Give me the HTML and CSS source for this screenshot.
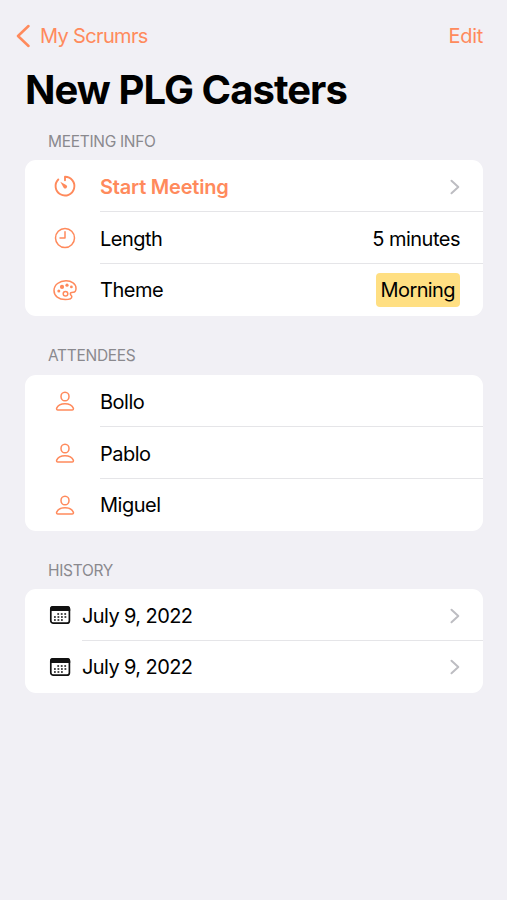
FILE: index.html
```
<!DOCTYPE html>
<html lang="en"><head><meta charset="utf-8"><title>New PLG Casters</title><link rel="stylesheet" href="styles.css"></head>
<body>
<svg class="defs" aria-hidden="true">
<symbol id="person" viewBox="0 0 24 24"><path d="M12 3.200c2.500 0 4 2 4 4.200s-1.500 4.400-4 4.400-4-2.200-4-4.400 1.500-4.200 4-4.200zM4.900 20.900h14.200c1.200 0 1.600-.8 1.200-1.800C19.400 17 16.500 14.800 12 14.800S4.600 17 3.700 19.100C3.300 20.100 3.700 20.900 4.900 20.900z"/></symbol>
<symbol id="calendar" viewBox="0 0 24 24"><rect x="2.800" y="3.800" width="18.600" height="16.400" rx="2.500" stroke-width="1.700"/><path d="M2 8V6a3 3 0 0 1 3-3h14.200a3 3 0 0 1 3 3v2z" fill="currentColor" stroke="none"/><path class="dots" d="M9.300 11h9.600M6 14h12.900M6 17h9.500"/></symbol>
<symbol id="chevron" viewBox="0 0 10 16"><path d="M1.500 1.700 8.300 8l-6.800 6.300"/></symbol>
</svg>
<nav class="nav"><a class="back"><svg class="back-icon" viewBox="0 0 14 24"><path d="M12.500 2 2 12l10.500 10"/></svg><span>My Scrumrs</span></a><a>Edit</a></nav>
<main>
<h1>New PLG Casters</h1>
<h2>MEETING INFO</h2>
<section class="card">
<div class="row accent"><svg class="icon" viewBox="0 0 24 24"><path d="M12 6.200V2.700A9.400 9.400 0 1 1 5.300 5.500" stroke-width="1.900"/><path d="m7.300 7.700 6.200 3.500a1.900 1.900 0 1 1-2.700 2.700z" fill="currentColor" stroke="none"/></svg><div class="cell"><b>Start Meeting</b><svg class="chevron"><use href="#chevron"/></svg></div></div>
<div class="row"><svg class="icon" viewBox="0 0 24 24"><circle cx="12" cy="12" r="9.500"/><path d="M12 5.700V12H7"/></svg><div class="cell"><span>Length</span><span>5 minutes</span></div></div>
<div class="row"><svg class="icon" viewBox="0 0 24 24"><path d="M13 2.800C6.500 2.800 1 6.800 1 12.500s4.800 9 11.300 9c4 0 6.500-1.200 6.500-2.800 0-1.400-1.500-1.600-1.500-3 0-1.500 1.300-1.500 3-1.500 1.700 0 2.700-1.500 2.700-4 0-4.400-4.500-7.400-10-7.400z"/><circle cx="12.500" cy="15.800" r="2.300"/><g fill="currentColor" stroke="none"><circle cx="5.800" cy="13" r="1.500"/><circle cx="9" cy="8.900" r="2.100"/><circle cx="14" cy="7.200" r="1.600"/><circle cx="18.400" cy="8.900" r="1.400"/></g></svg><div class="cell"><span>Theme</span><span class="badge">Morning</span></div></div>
</section>
<h2>ATTENDEES</h2>
<section class="card">
<div class="row"><svg class="icon"><use href="#person"/></svg><div class="cell">Bollo</div></div>
<div class="row"><svg class="icon"><use href="#person"/></svg><div class="cell">Pablo</div></div>
<div class="row"><svg class="icon"><use href="#person"/></svg><div class="cell">Miguel</div></div>
</section>
<h2>HISTORY</h2>
<section class="card history">
<div class="row"><svg class="icon"><use href="#calendar"/></svg><div class="cell"><span>July 9, 2022</span><svg class="chevron"><use href="#chevron"/></svg></div></div>
<div class="row"><svg class="icon"><use href="#calendar"/></svg><div class="cell"><span>July 9, 2022</span><svg class="chevron"><use href="#chevron"/></svg></div></div>
</section>
</main></body></html>
```
FILE: styles.css
```
*{box-sizing:border-box}
body{margin:0;height:900px;background:#f1f0f5;font:20px/24px Inter,sans-serif;letter-spacing:-.45px;color:#000}
svg{fill:none;stroke:currentColor;stroke-width:1.5;stroke-linecap:round;stroke-linejoin:round;flex:none}
.defs{display:none}
.nav{height:64px;padding:24px 24px 0 16px;display:flex;justify-content:space-between;color:#ff8a5c;letter-spacing:-.3px}
.nav span{letter-spacing:-.65px}
.back{display:flex;gap:10px}
.back-icon{width:14px;height:24px;stroke-width:2.5}
main{padding:0 24px 0 25px}
h1{margin:2px 0 0;font-size:40px;line-height:48px;letter-spacing:-.95px}
h2{margin:0 0 0 23px;font-size:15.500px;line-height:20px;font-weight:400;letter-spacing:-.3px;color:#8a898e;padding:18px 0 0;height:46px}
h2:not(:first-of-type){height:59px;padding-top:30px}
h2:last-of-type{height:58px}
.card{background:#fff;border-radius:11px;overflow:hidden}
.row{display:flex;height:52px;align-items:center;padding-left:28px}
.icon{width:24px;height:24px;color:#ff8a5c}
.cell{flex:1;margin-left:23px;height:52px;display:flex;align-items:center;justify-content:space-between;padding:2px 23px 0 0;letter-spacing:-.5px}
.row:not(:last-child) .cell{border-bottom:1px solid #e5e5e8}
.row:last-child .cell{padding-top:0}
.accent b{color:#ff8a5c;font-weight:600;letter-spacing:-.2px}
.chevron{width:10px;height:16px;color:#bdbdc2;stroke-width:2}
.badge{background:#ffdf82;border-radius:4px;padding:5px;height:34px;letter-spacing:-.6px}
.history .row{padding-left:23px}
.history .icon{color:#111}
.history .cell{margin-left:10px;letter-spacing:-.6px}
.dots{stroke-width:1.5;stroke-linecap:butt;stroke-dasharray:1.8 1.7}
```
